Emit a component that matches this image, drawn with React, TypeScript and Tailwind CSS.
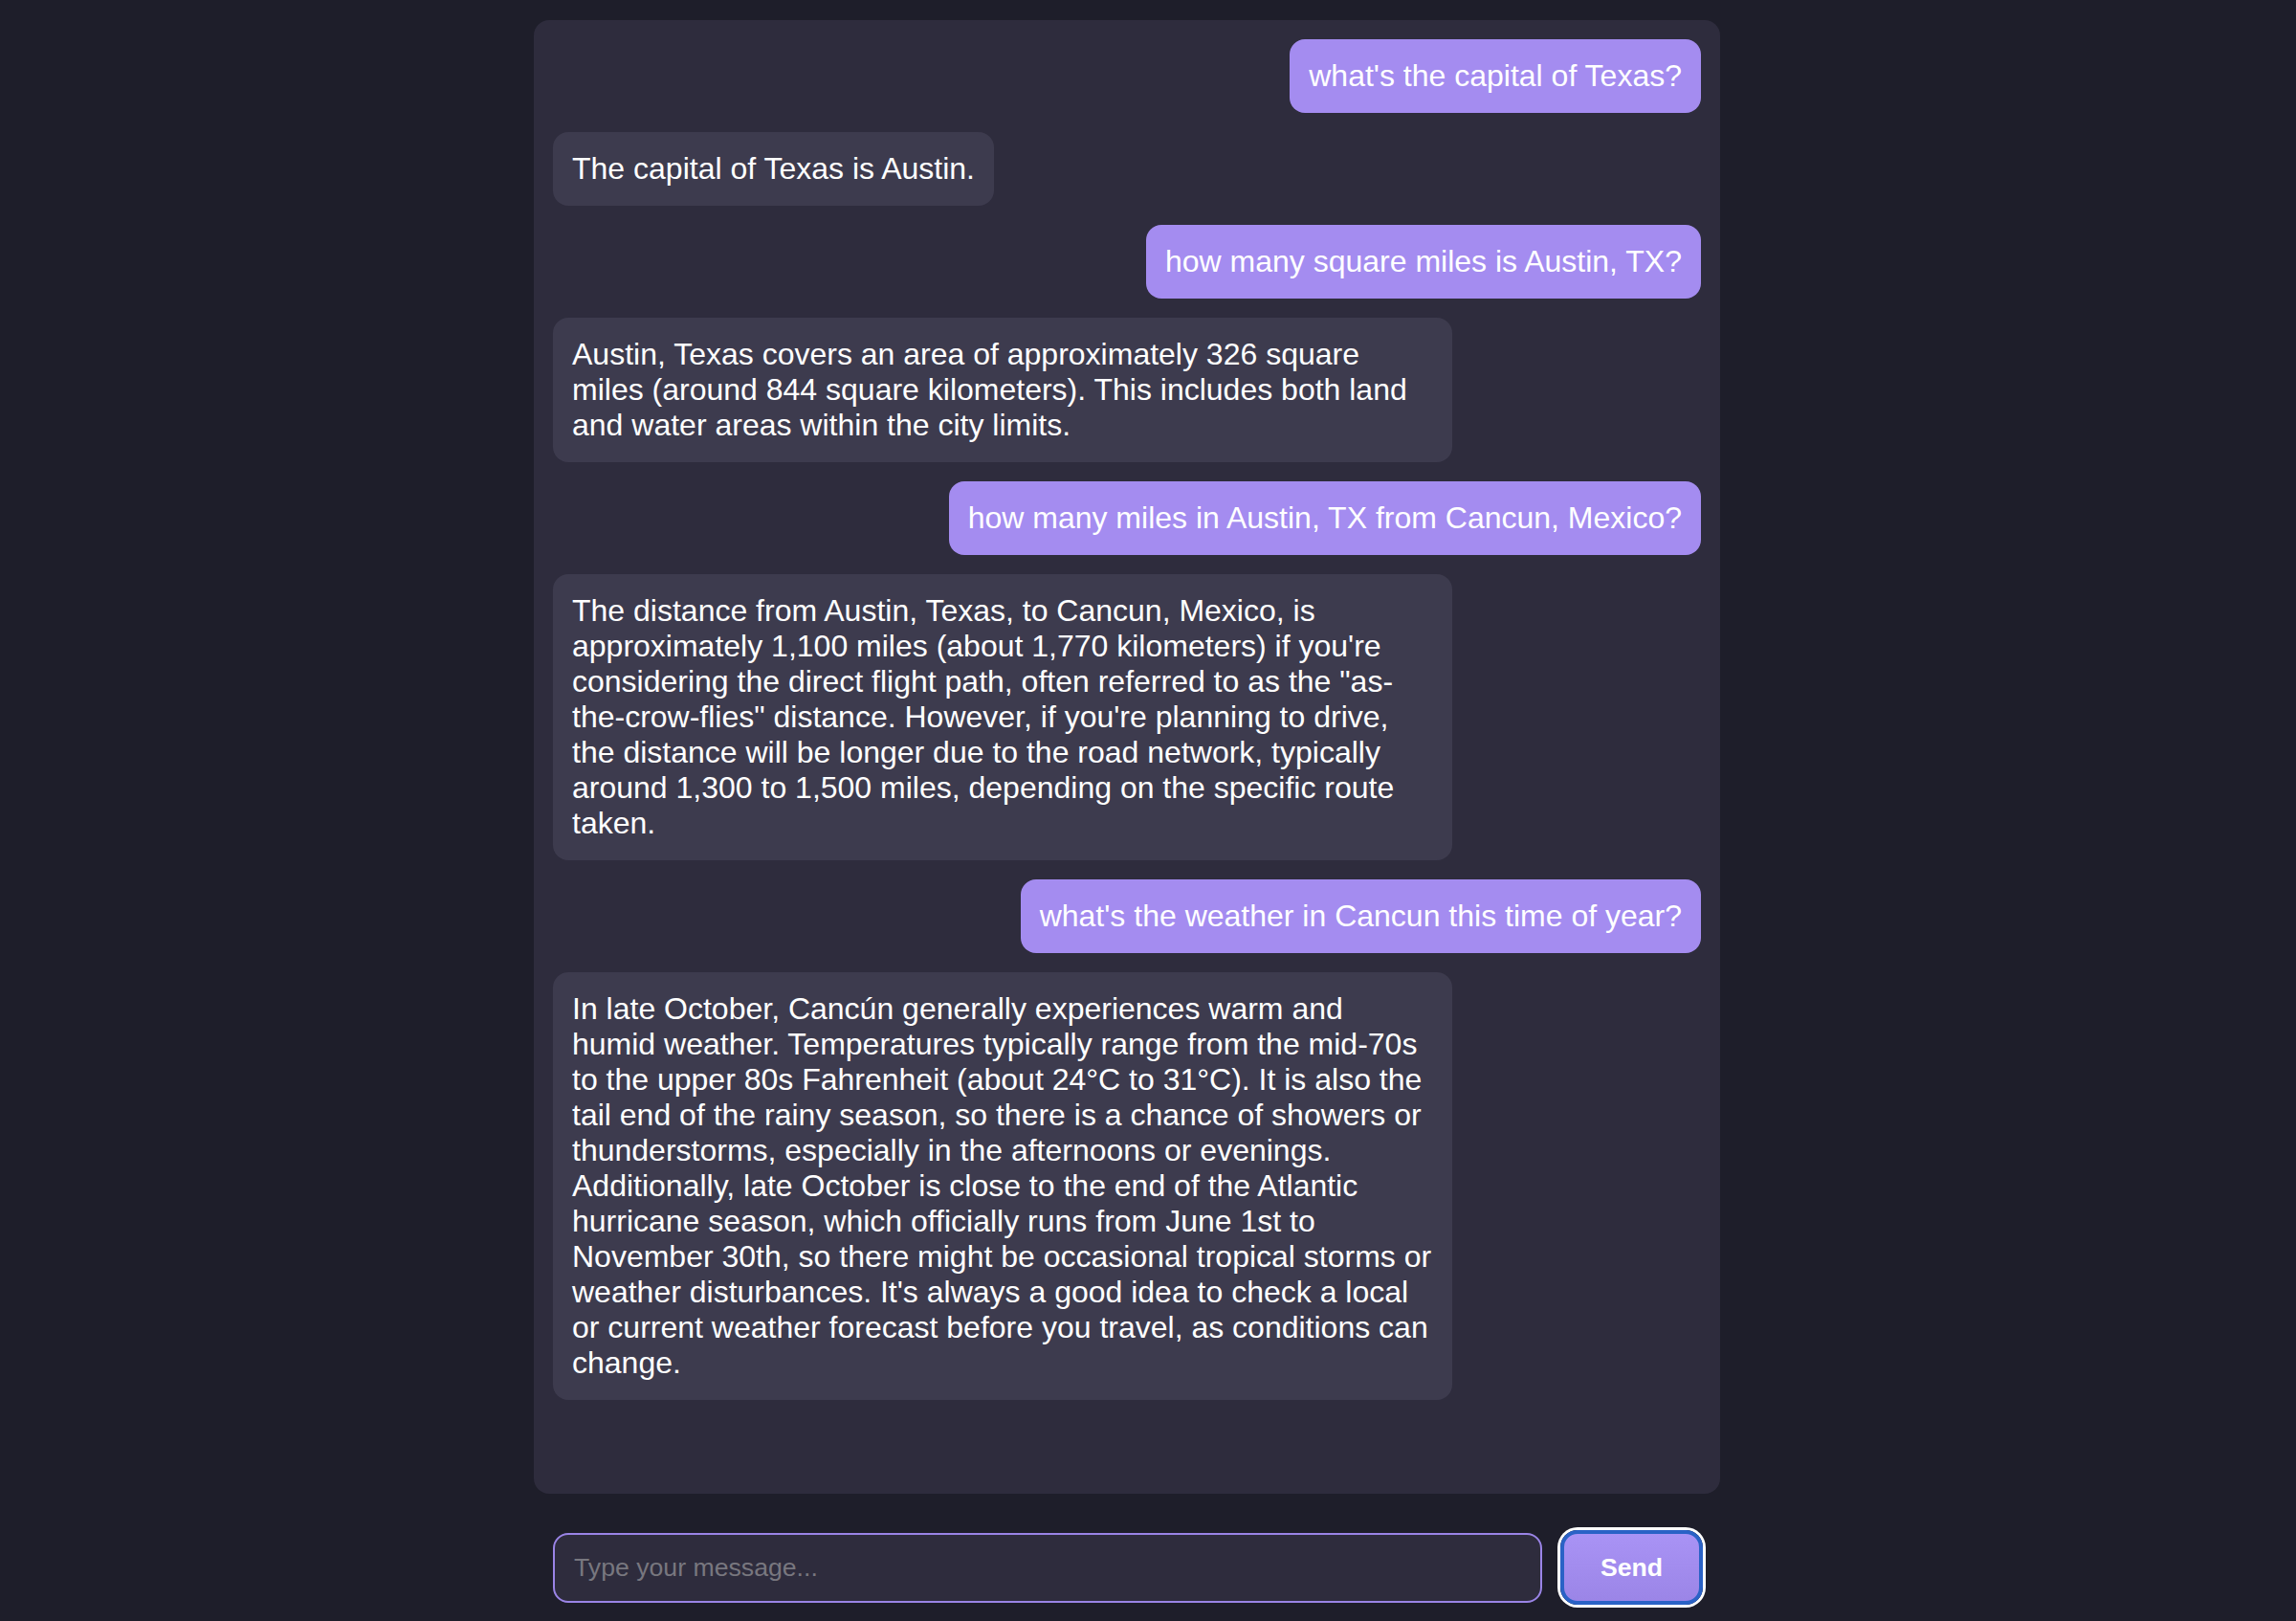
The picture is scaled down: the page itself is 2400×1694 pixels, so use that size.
const messages = [
  { role: "user", text: "what's the capital of Texas?" },
  { role: "assistant", text: "The capital of Texas is Austin." },
  { role: "user", text: "how many square miles is Austin, TX?" },
  {
    role: "assistant",
    text: "Austin, Texas covers an area of approximately 326 square miles (around 844 square kilometers). This includes both land and water areas within the city limits.",
  },
  { role: "user", text: "how many miles in Austin, TX from Cancun, Mexico?" },
  {
    role: "assistant",
    text: 'The distance from Austin, Texas, to Cancun, Mexico, is approximately 1,100 miles (about 1,770 kilometers) if you\'re considering the direct flight path, often referred to as the "as-the-crow-flies" distance. However, if you\'re planning to drive, the distance will be longer due to the road network, typically around 1,300 to 1,500 miles, depending on the specific route taken.',
  },
  { role: "user", text: "what's the weather in Cancun this time of year?" },
  {
    role: "assistant",
    text: "In late October, Cancún generally experiences warm and humid weather. Temperatures typically range from the mid-70s to the upper 80s Fahrenheit (about 24°C to 31°C). It is also the tail end of the rainy season, so there is a chance of showers or thunderstorms, especially in the afternoons or evenings. Additionally, late October is close to the end of the Atlantic hurricane season, which officially runs from June 1st to November 30th, so there might be occasional tropical storms or weather disturbances. It's always a good idea to check a local or current weather forecast before you travel, as conditions can change.",
  },
];

function Bubble({ role, text }: { role: string; text: string }) {
  if (role === "user") {
    return (
      <div className="self-end max-w-[940px] rounded-[16px] bg-[#a48cf0] px-[20px] py-[20px] text-[32px] leading-[37px] text-white">
        {text}
      </div>
    );
  }
  return (
    <div className="self-start max-w-[940px] rounded-[16px] bg-[#3d3b4e] px-[20px] py-[20px] text-[32px] leading-[37px] text-white">
      {text}
    </div>
  );
}

export default function App() {
  return (
    <main className="h-[1694px] overflow-hidden bg-[#1e1e2a] pt-[21px] font-['Liberation_Sans',Arial,sans-serif]">
      <div className="ml-[558px] flex w-[1240px] flex-col">
        {/* chat history */}
        <div className="flex h-[1540px] flex-col gap-[20px] overflow-hidden rounded-[16px] bg-[#2e2c3d] p-[20px]">
          {messages.map((m, i) => (
            <Bubble key={i} role={m.role} text={m.text} />
          ))}
        </div>

        {/* composer */}
        <div className="mt-[38px] flex items-center gap-[19px] pl-[20px] pr-[18px]">
          <input
            type="text"
            placeholder="Type your message..."
            className="h-[73px] flex-1 rounded-[16px] border-2 border-[#9a84e6] bg-[#2e2c3d] px-[20px] text-[26.67px] text-white outline-none placeholder:text-[#78777f]"
          />
          <button className="h-[78px] w-[149px] rounded-[18px] border-4 border-[#2a62c6] bg-linear-to-b from-[#a993f5] to-[#9b85e7] text-[26.67px] font-bold text-white ring-[3px] ring-white">
            Send
          </button>
        </div>
      </div>
    </main>
  );
}
